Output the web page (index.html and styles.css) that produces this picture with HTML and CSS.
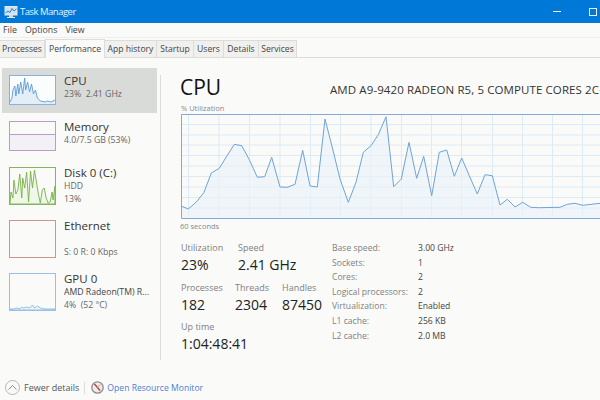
FILE: index.html
```html
<!DOCTYPE html>
<html lang="en">
<head>
<meta charset="utf-8">
<title>Task Manager</title>
<link rel="stylesheet" href="styles.css">
</head>
<body>
<div class="app">
  <header class="titlebar">
    <svg class="app-icon" viewBox="0 0 14 14" width="14" height="14"><rect x="1" y="1.5" width="12" height="8.5" fill="#cfe3f5" stroke="#e8e8e8"/><polyline points="1.5,8 4,6 6,7.5 8,3.5 10,6 12.5,4" fill="none" stroke="#2f7fc1" stroke-width="1"/><rect x="5" y="10" width="4" height="2" fill="#d8d8d8"/><rect x="3" y="12" width="8" height="1" fill="#e8e8e8"/></svg>
    <span class="title-text">Task Manager</span>
    <span class="win-min"></span>
    <span class="win-max"></span>
  </header>
  <nav class="menubar"><span>File</span><span>Options</span><span>View</span></nav>
  <nav class="tabs">
    <span class="tab t1">Processes</span>
    <span class="tab t2 active">Performance</span>
    <span class="tab t3">App history</span>
    <span class="tab t4">Startup</span>
    <span class="tab t5">Users</span>
    <span class="tab t6">Details</span>
    <span class="tab t7">Services</span>
  </nav>
  <div class="content">
    <aside class="sidebar">
      <div class="row row-s selected">
        <svg class="thumb short cpu" viewBox="0 0 46 28" preserveAspectRatio="none"><polygon class="fill-cpu" points="0,28 0,26 2,22 3,14 5,10 6,20 8,8 9,18 11,6 13,18 15,2 16,14 18,6 20,16 22,8 24,18 26,14 28,22 31,25 36,26 38,25 42,26 46,24 46,28"/><polyline fill="none" stroke="#5a9bd5" stroke-width=".9" points="0,26 2,22 3,14 5,10 6,20 8,8 9,18 11,6 13,18 15,2 16,14 18,6 20,16 22,8 24,18 26,14 28,22 31,25 36,26 38,25 42,26 46,24"/></svg>
        <div class="info"><div class="name">CPU</div><div class="sub">23%&nbsp; 2.41 GHz</div></div>
      </div>
      <div class="row row-s">
        <div class="thumb short mem"><div class="mem-used"></div></div>
        <div class="info"><div class="name">Memory</div><div class="sub">4.0/7.5 GB (53%)</div></div>
      </div>
      <div class="row row-l">
        <svg class="thumb disk" viewBox="0 0 46 36" preserveAspectRatio="none"><polygon fill="#eff6ea" stroke="#76b043" stroke-width=".9" points="0,36 1,24 3,30 4,12 6,26 8,22 10,6 12,30 13,10 15,20 17,4 19,34 21,3 23,20 25,2 27,14 29,26 31,35 33,22 35,20 37,30 39,35 41,34 43,24 44,32 46,18 46,36"/></svg>
        <div class="info"><div class="name">Disk 0 (C:)</div><div class="sub">HDD</div><div class="sub">13%</div></div>
      </div>
      <div class="row row-l">
        <div class="thumb eth"></div>
        <div class="info"><div class="name">Ethernet</div><div class="sub">&nbsp;</div><div class="sub">S: 0 R: 0 Kbps</div></div>
      </div>
      <div class="row row-l">
        <svg class="thumb gpu" viewBox="0 0 46 36" preserveAspectRatio="none"><polygon fill="#eef4fa" stroke="#6fa5d8" stroke-width=".7" points="0,36 0,35 4,35 7,34 10,35 12,33 14,34 17,33 20,34 23,31 25,34 28,32 31,34 36,35 46,35 46,36"/></svg>
        <div class="info"><div class="name">GPU 0</div><div class="sub dark">AMD Radeon(TM) R...</div><div class="sub">4%&nbsp; (52 °C)</div></div>
      </div>
    </aside>
    <div class="divider"></div>
    <main class="main">
      <div class="heading">
        <h1>CPU</h1>
        <div class="model">AMD A9-9420 RADEON R5, 5 COMPUTE CORES 2C+3G</div>
      </div>
      <div class="axis">% Utilization</div>
      <svg class="chart" viewBox="181 115 430 105" width="430" height="105">
        <g class="grid">
          <path d="M181 125.5H611M181 136H611M181 146H611M181 156.5H611M181 167H611M181 177.5H611M181 188H611M181 198.5H611M181 209H611"/>
          <path d="M188.5 115V220M219 115V220M249.5 115V220M280 115V220M310.5 115V220M340.5 115V220M371 115V220M401.5 115V220M431.5 115V220M461.5 115V220M492.5 115V220M522.5 115V220M552.5 115V220M582.5 115V220"/>
        </g>
        <polygon class="area" points="181.7,219 181.7,207.3 188.3,210 196.7,202.7 204,193.3 211.3,174 219.3,169.3 226.7,157.3 234.3,145.3 241.7,146.7 249.3,160.7 257.3,178.3 264.7,177.7 271.7,158.3 280,188 287.3,188.3 295,185.3 302.7,151.3 310,187 317.3,188 325,120 332.7,150 340,180 348.3,203.3 356,183.3 363.3,153.3 371,146.7 378.3,135.7 386,117.7 393.7,187.7 401.3,180 409,143.3 416.7,179.3 423.7,157.3 431.7,196.7 439.3,153.3 446.7,151 454.3,177.3 461.7,159 469.3,176.7 477.3,195 485,175.7 492.3,176.7 500,206 507.3,200.3 515,208 522.7,203.3 530.7,208.3 538.3,208.7 560,208.3 567.3,205.3 575,204.3 582.7,206.3 600,204.3 600,219"/>
        <polyline class="line" points="181.7,207.3 188.3,210 196.7,202.7 204,193.3 211.3,174 219.3,169.3 226.7,157.3 234.3,145.3 241.7,146.7 249.3,160.7 257.3,178.3 264.7,177.7 271.7,158.3 280,188 287.3,188.3 295,185.3 302.7,151.3 310,187 317.3,188 325,120 332.7,150 340,180 348.3,203.3 356,183.3 363.3,153.3 371,146.7 378.3,135.7 386,117.7 393.7,187.7 401.3,180 409,143.3 416.7,179.3 423.7,157.3 431.7,196.7 439.3,153.3 446.7,151 454.3,177.3 461.7,159 469.3,176.7 477.3,195 485,175.7 492.3,176.7 500,206 507.3,200.3 515,208 522.7,203.3 530.7,208.3 538.3,208.7 560,208.3 567.3,205.3 575,204.3 582.7,206.3 600,204.3"/>
        <path class="frame" d="M611 115.5H181.5V219.5H611"/>
      </svg>
      <div class="axis seconds">60 seconds</div>
      <div class="stats">
        <div class="stat-col">
          <div class="stat-row r1">
            <div class="stat s-util"><div class="label">Utilization</div><div class="value">23%</div></div>
            <div class="stat"><div class="label">Speed</div><div class="value">2.41 GHz</div></div>
          </div>
          <div class="stat-row r2">
            <div class="stat s-proc"><div class="label">Processes</div><div class="value">182</div></div>
            <div class="stat s-thr"><div class="label">Threads</div><div class="value">2304</div></div>
            <div class="stat"><div class="label">Handles</div><div class="value">87450</div></div>
          </div>
          <div class="stat"><div class="label">Up time</div><div class="value">1:04:48:41</div></div>
        </div>
        <dl class="specs">
          <dt>Base speed:</dt><dd>3.00 GHz</dd>
          <dt>Sockets:</dt><dd>1</dd>
          <dt>Cores:</dt><dd>2</dd>
          <dt>Logical processors:</dt><dd>2</dd>
          <dt>Virtualization:</dt><dd>Enabled</dd>
          <dt>L1 cache:</dt><dd>256 KB</dd>
          <dt>L2 cache:</dt><dd>2.0 MB</dd>
        </dl>
      </div>
    </main>
  </div>
  <footer class="footer">
    <svg class="fewer-icon" viewBox="0 0 15 15" width="15" height="15"><circle cx="7.5" cy="7.5" r="7" fill="none" stroke="#b5b5b5"/><polyline points="3.5,9.5 7.5,5.5 11.5,9.5" fill="none" stroke="#8a8a8a"/></svg>
    <span class="fewer">Fewer details</span>
    <span class="sep"></span>
    <svg class="monitor-icon" viewBox="0 0 13 13" width="13" height="13"><circle cx="6.5" cy="6.5" r="5.7" fill="#ececec" stroke="#8d8d8d" stroke-width="1.3"/><line x1="3.5" y1="3" x2="9" y2="9.5" stroke="#c0392b" stroke-width="1.3"/><line x1="9.5" y1="3.5" x2="6" y2="6.5" stroke="#b9a58e"/></svg>
    <span class="link">Open Resource Monitor</span>
  </footer>
</div>
</body>
</html>
```
FILE: styles.css
```css
* { box-sizing: border-box; }
html, body { margin: 0; padding: 0; }
body { width: 600px; height: 400px; overflow: hidden; background: #fafbf9; font-family: "Open Sans", "Noto Sans", sans-serif; color: #222; }
.app { width: 600px; height: 400px; display: flex; flex-direction: column; overflow: hidden; }

.titlebar { height: 23px; background: #0078d7; display: flex; align-items: center; padding-left: 4px; flex: none; }
.app-icon { flex: none; }
.title-text { margin-left: 2px; color: #e9f3fb; font-size: 9.5px; letter-spacing: -.5px; }
.win-min { margin-left: auto; width: 8px; height: 1px; background: #fff; }
.win-max { margin-left: 28px; margin-right: 3px; width: 8px; height: 8px; border: 1px solid #e6eefb; }

.menubar { height: 15px; flex: none; display: flex; gap: 8px; padding-left: 3px; align-items: center; font-size: 8.8px; color: #444; border-bottom: 1px solid #efefed; }

.tabs { height: 20px; flex: none; display: flex; align-items: flex-end; border-bottom: 1px solid #dcdcda; padding-top: 2px; font-size: 8.6px; color: #444; }
.tab { height: 17px; display: flex; align-items: center; justify-content: center; background: #f0f0ee; border: 1px solid #dcdcda; border-bottom: 0; border-left: 0; white-space: nowrap; }
.tab.active { height: 19px; margin-bottom: -1px; background: #fafbf9; border-left: 1px solid #dcdcda; }
.t1 { width: 45px; } .t2 { width: 60px; } .t3 { width: 52px; } .t4 { width: 37px; } .t5 { width: 30px; } .t6 { width: 35px; } .t7 { width: 38px; }

.content { flex: none; height: 307px; display: flex; }
.sidebar { width: 160px; flex: none; padding: 10px 3px 0 2px; }
.row { display: flex; padding: 7px 0 0 7px; }
.row-s { height: 46px; }
.row-l { height: 53px; }
.selected { background: #d9dbd8; height: 45px; margin-bottom: 1px; }
.thumb { display: block; width: 47px; height: 38px; flex: none; border: 1px solid; }
.thumb.short { height: 30px; }
.cpu { border-color: #86b2dc; background: #fbfcfc; }
.fill-cpu { fill: #e3eef7; }
.mem { border-color: #b99ccb; display: flex; flex-direction: column; justify-content: flex-end; }
.mem-used { height: 16px; background: #f3f0f6; border-top: 1px solid #b99ccb; }
.disk { border-color: #82b561; }
.eth { border-color: #c79a85; }
.gpu { border-color: #9dbfe0; }
.info { margin-left: 8px; margin-top: -1px; white-space: nowrap; }
.name { font-size: 11.5px; line-height: 14px; color: #333; }
.sub { font-size: 8.7px; line-height: 13px; color: #666; }
.sub.dark { color: #444; }

.divider { width: 1px; flex: none; margin: 17px 0 5px 0; background: #dcdddb; }
.main { margin-left: 19px; width: 420px; overflow: hidden; padding-top: 15px; }
.heading { display: flex; align-items: center; height: 29px; white-space: nowrap; }
h1 { margin: 0; font-size: 21px; font-weight: 400; color: #111; line-height: 29px; width: 150px; flex: none; }
.model { font-size: 11.5px; color: #333; letter-spacing: .1px; padding-top: 3px; }
.axis { font-size: 7.5px; line-height: 12px; color: #888; padding-left: 1px; }
.chart { display: block; margin-left: 1px; margin-top: 0; }
.grid path { fill: none; stroke: #dcebf6; stroke-width: 1; }
.area { fill: #eaf1f8; fill-opacity: .65; }
.line { fill: none; stroke: #6ea4d8; stroke-width: 1; }
.frame { fill: none; stroke: #84a9d6; stroke-width: 1; }
.seconds { margin-top: 1px; padding-left: 0; }

.stats { display: flex; margin-top: 9px; padding-left: 1px; }
.stat-col { width: 151px; flex: none; }
.stat-row { display: flex; }
.r1 { margin-bottom: 5.5px; }
.r2 { margin-bottom: 5.5px; }
.s-util { width: 57px; }
.s-proc { width: 54px; }
.s-thr { width: 47px; }
.label { font-size: 9px; line-height: 14px; color: #808080; white-space: nowrap; }
.value { font-size: 14px; line-height: 20px; color: #222; white-space: nowrap; }
.specs { margin: 0; display: grid; grid-template-columns: 86px auto; grid-auto-rows: 14.6px; font-size: 8.6px; line-height: 14.6px; align-content: start; }
.specs dt { color: #808080; white-space: nowrap; }
.specs dd { margin: 0; color: #444; white-space: nowrap; }

.footer { flex: 1; display: flex; align-items: center; padding: 10px 0 0 5px; font-size: 9px; }
.fewer { margin-left: 4px; color: #555; }
.sep { width: 1px; height: 12px; background: #dcdcda; margin: 0 6px 0 5px; }
.link { margin-left: 3px; color: #4a7fd6; font-size: 8.6px; }
```
